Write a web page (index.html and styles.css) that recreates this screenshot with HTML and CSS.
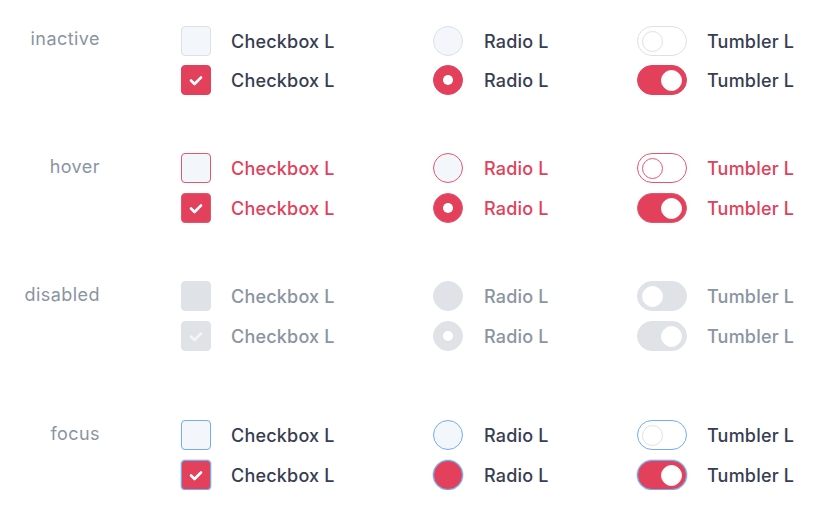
FILE: index.html
```html
<!DOCTYPE html>
<html>
<head>
<meta charset="utf-8">
<link rel="stylesheet" href="styles.css">
</head>
<body>
<div class="page">

  <section class="group">
    <div class="state">inactive</div>
    <div class="rows">
      <div class="row">
        <div class="item cb-col"><span class="box cb"></span><span class="txt">Checkbox L</span></div>
        <div class="item rd-col"><span class="box rd"></span><span class="txt">Radio L</span></div>
        <div class="item tg-col"><span class="tg"><span class="knob"></span></span><span class="txt">Tumbler L</span></div>
      </div>
      <div class="row">
        <div class="item cb-col"><span class="box cb on"><svg viewBox="0 0 30 30"><path d="M10 15.5 L13.5 19 L20 12.5"/></svg></span><span class="txt">Checkbox L</span></div>
        <div class="item rd-col"><span class="box rd on"><span class="dot"></span></span><span class="txt">Radio L</span></div>
        <div class="item tg-col"><span class="tg on"><span class="knob"></span></span><span class="txt">Tumbler L</span></div>
      </div>
    </div>
  </section>

  <section class="group hover">
    <div class="state">hover</div>
    <div class="rows">
      <div class="row">
        <div class="item cb-col"><span class="box cb"></span><span class="txt">Checkbox L</span></div>
        <div class="item rd-col"><span class="box rd"></span><span class="txt">Radio L</span></div>
        <div class="item tg-col"><span class="tg"><span class="knob"></span></span><span class="txt">Tumbler L</span></div>
      </div>
      <div class="row">
        <div class="item cb-col"><span class="box cb on"><svg viewBox="0 0 30 30"><path d="M10 15.5 L13.5 19 L20 12.5"/></svg></span><span class="txt">Checkbox L</span></div>
        <div class="item rd-col"><span class="box rd on"><span class="dot"></span></span><span class="txt">Radio L</span></div>
        <div class="item tg-col"><span class="tg on"><span class="knob"></span></span><span class="txt">Tumbler L</span></div>
      </div>
    </div>
  </section>

  <section class="group disabled">
    <div class="state">disabled</div>
    <div class="rows">
      <div class="row">
        <div class="item cb-col"><span class="box cb"></span><span class="txt">Checkbox L</span></div>
        <div class="item rd-col"><span class="box rd"></span><span class="txt">Radio L</span></div>
        <div class="item tg-col"><span class="tg"><span class="knob"></span></span><span class="txt">Tumbler L</span></div>
      </div>
      <div class="row">
        <div class="item cb-col"><span class="box cb on"><svg viewBox="0 0 30 30"><path d="M10 15.5 L13.5 19 L20 12.5"/></svg></span><span class="txt">Checkbox L</span></div>
        <div class="item rd-col"><span class="box rd on"><span class="dot"></span></span><span class="txt">Radio L</span></div>
        <div class="item tg-col"><span class="tg on"><span class="knob"></span></span><span class="txt">Tumbler L</span></div>
      </div>
    </div>
  </section>

  <section class="group focus">
    <div class="state">focus</div>
    <div class="rows">
      <div class="row">
        <div class="item cb-col"><span class="box cb"></span><span class="txt">Checkbox L</span></div>
        <div class="item rd-col"><span class="box rd"></span><span class="txt">Radio L</span></div>
        <div class="item tg-col"><span class="tg"><span class="knob"></span></span><span class="txt">Tumbler L</span></div>
      </div>
      <div class="row">
        <div class="item cb-col"><span class="box cb on"><svg viewBox="0 0 30 30"><path d="M10 15.5 L13.5 19 L20 12.5"/></svg></span><span class="txt">Checkbox L</span></div>
        <div class="item rd-col"><span class="box rd on nodot"></span><span class="txt">Radio L</span></div>
        <div class="item tg-col"><span class="tg on"><span class="knob"></span></span><span class="txt">Tumbler L</span></div>
      </div>
    </div>
  </section>

</div>
</body>
</html>
```

FILE: styles.css
```css
* { box-sizing: border-box; }
html, body { margin: 0; padding: 0; background: #ffffff; }
body {
  font-family: Inter, "Noto Sans", "Liberation Sans", sans-serif;
  color: #373d52;
}
.page {
  padding-top: 26px;
  display: flex;
  flex-direction: column;
  gap: 58px;
}
.group { display: flex; align-items: flex-start; }
.group.focus { margin-top: 11px; }
.state {
  width: 100px;
  text-align: right;
  font-size: 18px;
  line-height: 25px;
  letter-spacing: 0.45px;
  color: #8a94a2;
  font-weight: 400;
}
.group.hover .state, .group.disabled .state, .group.focus .state { padding-top: 1px; }
.rows {
  margin-left: 81px;
  display: flex;
  flex-direction: column;
  gap: 9px;
}
.group.hover .rows, .group.disabled .rows, .group.focus .rows { gap: 10px; }
.row { display: flex; height: 30px; align-items: center; }
.item { display: flex; align-items: center; }
.cb-col { width: 252px; }
.rd-col { width: 204px; }
.tg-col { width: 185px; }
.txt {
  font-size: 18px;
  font-weight: 500;
  line-height: 30px;
  padding-top: 2px;
  letter-spacing: 0.2px;
  white-space: nowrap;
}
.cb-col .txt, .tg-col .txt { margin-left: 20px; }
.rd-col .txt { margin-left: 21px; }

.box {
  width: 30px; height: 30px;
  flex: none;
  background: #f3f6fa;
  border: 1px solid #dde1e7;
  display: flex; align-items: center; justify-content: center;
}
.cb { border-radius: 4px; }
.rd { border-radius: 50%; }
.box.on { background: #e2405b; border-color: #e2405b; }
.box svg { width: 30px; height: 30px; flex: none; margin: -1px; }
.box svg path {
  fill: none; stroke: #ffffff; stroke-width: 2.6;
  stroke-linecap: round; stroke-linejoin: round;
}
.dot { width: 10px; height: 10px; border-radius: 50%; background: #ffffff; }

.tg {
  width: 50px; height: 30px; flex: none;
  border-radius: 15px;
  background: #ffffff;
  border: 1px solid #dde1e7;
  display: flex; align-items: center;
  padding: 0 4px;
}
.tg .knob {
  width: 21px; height: 21px; border-radius: 50%;
  background: #ffffff;
  border: 1px solid #dde1e7;
}
.tg.on { background: #e2405b; border-color: #e2405b; justify-content: flex-end; }
.tg.on .knob { border-color: #ffffff; }

/* hover */
.hover .txt { color: #e2405b; }
.hover .box { border-color: #e5566e; }
.hover .tg { border-color: #e5566e; }
.hover .tg .knob { border-color: #e5566e; }
.hover .tg.on .knob { border-color: #ffffff; }

/* disabled */
.disabled .txt { color: #8a94a2; }
.disabled .box, .disabled .box.on { background: #dfe2e6; border-color: #dfe2e6; }
.disabled .tg, .disabled .tg.on { background: #dfe2e6; border-color: #dfe2e6; }
.disabled .tg .knob { border-color: #ffffff; }
.disabled .box svg path { stroke: #f4f5f7; }

/* focus */
.focus .box { border-color: #72adf2; }
.focus .box.on { border-color: #72adf2; box-shadow: 0 0 0 0.5px #a9cdf7; }
.focus .tg { border-color: #72adf2; }
.focus .tg.on { border-color: #72adf2; box-shadow: 0 0 0 0.5px #a9cdf7; }
.focus .tg.on .knob { border-color: #ffffff; }
```
